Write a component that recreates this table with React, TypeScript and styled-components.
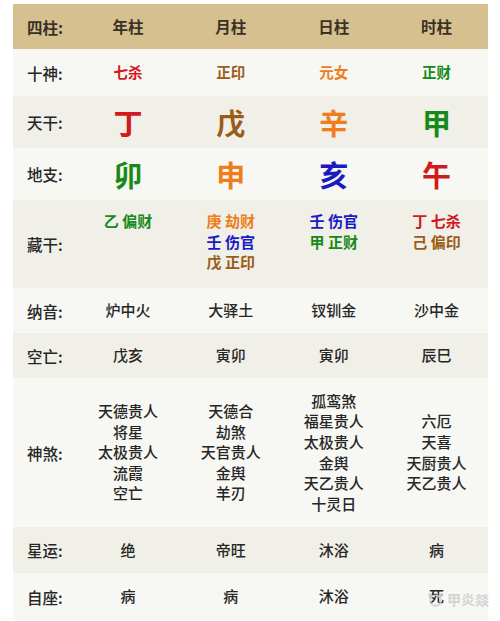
import React from "react";
import styled, { createGlobalStyle } from "styled-components";

const Global = createGlobalStyle`
  html, body { margin: 0; padding: 0; background: #ffffff; }
  body { font-family: "Noto Sans CJK SC", "Noto Sans", sans-serif; color: #333; }
`;

const Page = styled.div`
  position: relative;
  padding: 4px 12px 0 13px;
  width: 500px;
  height: 621px;
  box-sizing: border-box;
  overflow: hidden;
`;

const Table = styled.div`
  display: flex;
  flex-direction: column;
`;

const Row = styled.div<{ $bg: string; $h: number; $top?: boolean }>`
  display: grid;
  grid-template-columns: 63.5px repeat(4, 1fr);
  height: ${(p) => p.$h}px;
  background: ${(p) => p.$bg};
  align-items: ${(p) => (p.$top ? "start" : "center")};
`;

const Label = styled.div<{ $header?: boolean }>`
  padding-left: 14px;
  font-size: 15.5px;
  font-weight: ${(p) => (p.$header ? 700 : 500)};
  color: ${(p) => (p.$header ? "#3a3126" : "#262626")};
  align-self: center;
  line-height: 20px;
`;

const Cell = styled.div<{ $size?: number; $color?: string; $weight?: number; $pt?: number }>`
  text-align: center;
  font-size: ${(p) => p.$size ?? 15}px;
  color: ${(p) => p.$color ?? "#262626"};
  font-weight: ${(p) => p.$weight ?? 500};
  line-height: ${(p) => ((p.$size ?? 15) > 20 ? "34px" : "20.6px")};
  padding-top: ${(p) => p.$pt ?? 0}px;
`;

const Line = styled.div<{ $color?: string }>`
  color: ${(p) => p.$color ?? "inherit"};
`;

const Watermark = styled.div`
  position: absolute;
  right: 11px;
  bottom: 12px;
  display: flex;
  align-items: center;
  gap: 3px;
  color: rgba(205, 205, 205, 0.85);
  font-size: 14px;
  font-weight: 700;
  pointer-events: none;
`;

const RED = "#d21a1e";
const BROWN = "#9b5c16";
const ORANGE = "#ee7d1c";
const GREEN = "#168a18";
const BLUE = "#1a1ac4";
const L1 = "#f7f7f3";
const L2 = "#f0efe8";

type Multi = { t: string; c?: string }[];

const cangGan: Multi[] = [
  [{ t: "乙 偏财", c: GREEN }],
  [
    { t: "庚 劫财", c: ORANGE },
    { t: "壬 伤官", c: BLUE },
    { t: "戊 正印", c: BROWN },
  ],
  [
    { t: "壬 伤官", c: BLUE },
    { t: "甲 正财", c: GREEN },
  ],
  [
    { t: "丁 七杀", c: RED },
    { t: "己 偏印", c: BROWN },
  ],
];

const shenSha: string[][] = [
  ["天德贵人", "将星", "太极贵人", "流霞", "空亡"],
  ["天德合", "劫煞", "天官贵人", "金舆", "羊刃"],
  ["孤鸾煞", "福星贵人", "太极贵人", "金舆", "天乙贵人", "十灵日"],
  ["六厄", "天喜", "天厨贵人", "天乙贵人"],
];

const simple = (label: string, vals: string[], bg: string, h: number) => (
  <Row $bg={bg} $h={h} key={label}>
    <Label>{label}</Label>
    {vals.map((v, i) => (
      <Cell key={i}>{v}</Cell>
    ))}
  </Row>
);

export default function App() {
  return (
    <Page>
      <Global />
      <Table>
        <Row $bg="#d6c090" $h={45}>
          <Label $header>四柱:</Label>
          {["年柱", "月柱", "日柱", "时柱"].map((t) => (
            <Cell key={t} $weight={700} $size={15.5} $color="#3a3126">
              {t}
            </Cell>
          ))}
        </Row>
        <Row $bg={L1} $h={47}>
          <Label>十神:</Label>
          <Cell $size={14.5} $weight={700} $color={RED}>七杀</Cell>
          <Cell $size={14.5} $weight={700} $color={BROWN}>正印</Cell>
          <Cell $size={14.5} $weight={700} $color={ORANGE}>元女</Cell>
          <Cell $size={14.5} $weight={700} $color={GREEN}>正财</Cell>
        </Row>
        <Row $bg={L2} $h={52}>
          <Label>天干:</Label>
          <Cell $size={29} $weight={700} $color={RED}>丁</Cell>
          <Cell $size={29} $weight={700} $color={BROWN}>戊</Cell>
          <Cell $size={29} $weight={700} $color={ORANGE}>辛</Cell>
          <Cell $size={29} $weight={700} $color={GREEN}>甲</Cell>
        </Row>
        <Row $bg={L1} $h={52}>
          <Label>地支:</Label>
          <Cell $size={29} $weight={700} $color={GREEN}>卯</Cell>
          <Cell $size={29} $weight={700} $color={ORANGE}>申</Cell>
          <Cell $size={29} $weight={700} $color={BLUE}>亥</Cell>
          <Cell $size={29} $weight={700} $color={RED}>午</Cell>
        </Row>
        <Row $bg={L2} $h={88} $top>
          <Label>藏干:</Label>
          {cangGan.map((lines, i) => (
            <Cell key={i} $weight={700} $pt={11}>
              {lines.map((l, j) => (
                <Line key={j} $color={l.c}>
                  {l.t}
                </Line>
              ))}
            </Cell>
          ))}
        </Row>
        {simple("纳音:", ["炉中火", "大驿土", "钗钏金", "沙中金"], L1, 45)}
        {simple("空亡:", ["戊亥", "寅卯", "寅卯", "辰巳"], L2, 45)}
        <Row $bg={L1} $h={149}>
          <Label>神煞:</Label>
          {shenSha.map((lines, i) => (
            <Cell key={i}>
              {lines.map((l, j) => (
                <Line key={j}>{l}</Line>
              ))}
            </Cell>
          ))}
        </Row>
        {simple("星运:", ["绝", "帝旺", "沐浴", "病"], L2, 46)}
        {simple("自座:", ["病", "病", "沐浴", "死"], L1, 47)}
      </Table>
      <Watermark>
        <svg width="17" height="15" viewBox="0 0 16 14">
          <circle cx="8" cy="8" r="5" fill="none" stroke="rgba(205,205,205,0.9)" strokeWidth="1.6" />
          <circle cx="3" cy="3" r="2" fill="rgba(205,205,205,0.9)" />
          <circle cx="13" cy="3" r="2" fill="rgba(205,205,205,0.9)" />
        </svg>
        <span>甲炎燚</span>
      </Watermark>
    </Page>
  );
}
